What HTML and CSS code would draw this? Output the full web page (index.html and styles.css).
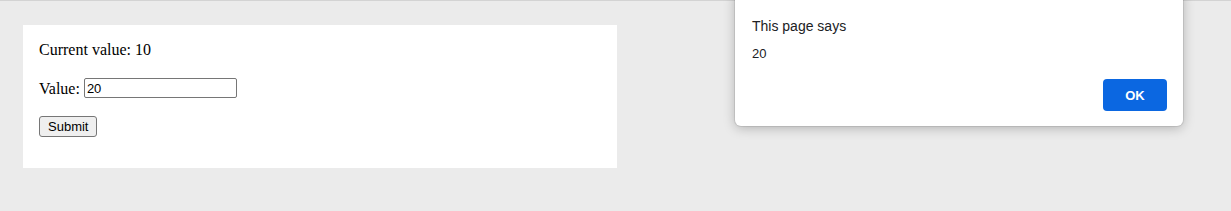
FILE: index.html
```html
<!DOCTYPE html>
<html lang="en">
<head>
    <meta charset="UTF-8">
    <meta name="viewport" content="width=device-width, initial-scale=1.0">
    <title>Current value</title>
    <link rel="stylesheet" href="styles.css">
</head>
<body>
    <div class="page">
        <div class="panel">
            <p>Current value: 10</p>
            <form class="value-form">
                <p>
                    <label for="value">Value:</label>
                    <input type="text" id="value" value="20">
                </p>
                <button type="button">Submit</button>
            </form>
        </div>
    </div>

    <!-- alert dialog -->
    <div class="dialog">
        <div class="dialog-title">This page says</div>
        <div class="dialog-message">20</div>
        <div class="dialog-actions">
            <button class="ok-btn">OK</button>
        </div>
    </div>
</body>
</html>
```

FILE: styles.css
```css
html, body {
    margin: 0;
    height: 100%;
}

body {
    background-color: #ebebeb;
    border-top: 1px solid #d3d3d3;
    box-sizing: border-box;
    font-family: 'Liberation Serif', 'Times New Roman', serif;
    font-size: 16px;
    color: #000;
}

.page {
    padding: 24px 0 0 23px;
}

.panel {
    background-color: #fff;
    width: 594px;
    height: 143px;
    box-sizing: border-box;
    padding: 0 16px;
    overflow: hidden;
}

.panel p {
    margin: 16px 0;
}

.value-form p {
    margin: 19px 0 18px;
}

.value-form input {
    font-family: 'Liberation Sans', Arial, sans-serif;
    font-size: 13px;
    width: 153px;
    height: 20px;
    box-sizing: border-box;
    padding: 1px 2px;
    border: 1px solid #767676;
    border-radius: 2px;
    margin: 0;
    vertical-align: 1px;
}

.value-form button {
    font-family: 'Liberation Sans', Arial, sans-serif;
    font-size: 13px;
    height: 21px;
    padding: 1px 8px;
    background-color: #efefef;
    border: 1px solid #767676;
    border-radius: 3px;
    color: #000;
    margin: 0;
}

.dialog {
    position: absolute;
    top: -10px;
    left: 735px;
    width: 448px;
    height: 136px;
    box-sizing: border-box;
    background-color: #fff;
    border-radius: 6px;
    box-shadow: 0 2px 12px rgba(0, 0, 0, 0.25), 0 0 0 1px rgba(0, 0, 0, 0.08);
    padding: 26px 16px 0 17px;
    font-family: 'Liberation Sans', Arial, sans-serif;
    color: #202124;
}

.dialog-title {
    font-size: 14px;
    line-height: 20px;
}

.dialog-message {
    font-size: 13px;
    line-height: 18px;
    margin-top: 9px;
}

.dialog-actions {
    display: flex;
    justify-content: flex-end;
    margin-top: 16px;
}

.ok-btn {
    width: 64px;
    height: 32px;
    border: none;
    border-radius: 4px;
    background-color: #0b67e1;
    color: #fff;
    font-family: 'Liberation Sans', Arial, sans-serif;
    font-size: 13px;
    font-weight: bold;
}
```
